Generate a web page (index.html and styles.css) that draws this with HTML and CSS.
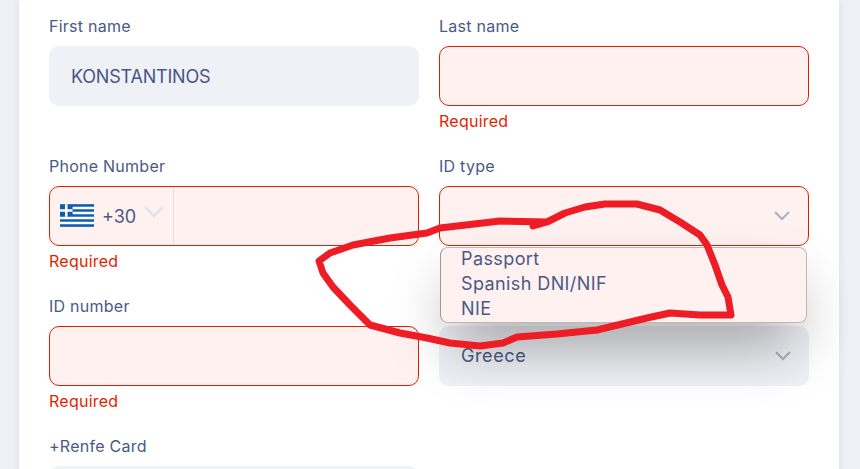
FILE: index.html
```html
<!DOCTYPE html>
<html lang="en">
<head>
    <meta charset="UTF-8">
    <meta name="viewport" content="width=device-width, initial-scale=1.0">
    <title>Passenger details</title>
    <link rel="stylesheet" href="styles.css">
</head>
<body>
    <form class="card">
        <div class="field">
            <label for="firstName">First name</label>
            <input class="input" type="text" id="firstName" value="KONSTANTINOS" readonly>
        </div>
        <div class="field">
            <label for="lastName">Last name</label>
            <input class="input invalid" type="text" id="lastName">
            <div class="error">Required</div>
        </div>
        <div class="field">
            <label for="phone">Phone Number</label>
            <div class="phone invalid">
                <div class="prefix">
                    <svg class="flag" width="34" height="25" viewBox="0 0 27 18">
                        <rect width="27" height="18" fill="#0d5eaf"/>
                        <path d="M10 3h17M10 7h17M0 11h27M0 15h27" stroke="#fff" stroke-width="2"/>
                        <path d="M5 0v10M0 5h10" stroke="#fff" stroke-width="2"/>
                    </svg>
                    <span class="dial">+30</span>
                    <svg class="chevron-light" width="20" height="12" viewBox="0 0 20 12">
                        <path d="M1 1l9 9 9-9" fill="none" stroke="#e0e3ee" stroke-width="2.6"/>
                    </svg>
                </div>
            </div>
            <div class="error">Required</div>
        </div>
        <div class="field">
            <label>ID type</label>
            <div class="select invalid">
                <svg width="16" height="10" viewBox="0 0 16 10">
                    <path d="M1 1l7 7 7-7" fill="none" stroke="#a9b0c9" stroke-width="2"/>
                </svg>
            </div>
            <ul class="dropdown">
                <li>Passport</li>
                <li>Spanish DNI/NIF</li>
                <li>NIE</li>
            </ul>
        </div>
        <div class="field">
            <label for="idNumber">ID number</label>
            <input class="input invalid" type="text" id="idNumber">
            <div class="error">Required</div>
        </div>
        <div class="field">
            <div class="select filled">
                <span>Greece</span>
                <svg width="16" height="10" viewBox="0 0 16 10">
                    <path d="M1 1l7 7 7-7" fill="none" stroke="#a9b0c9" stroke-width="2"/>
                </svg>
            </div>
        </div>
        <div class="field">
            <label for="renfe">+Renfe Card</label>
            <input class="input" type="text" id="renfe" readonly>
        </div>
    </form>

    <svg class="scribble" width="860" height="469" viewBox="0 0 860 469">
        <path d="M533 226L547 222L565 213L585 207L605 204L637 204L660 210L680 222L700 235L707 245L715 265L722 285L728 297L731 315L700 315L670 313L647 318L597 330L557 334L517 337L503 343L480 346L450 343L427 338L400 333L370 325L350 305L333 287L323 273L319 261L330 253L353 245L390 238L427 233L440 228L500 221L547 222" fill="none" stroke="#ee1c25" stroke-width="7" stroke-linejoin="round" stroke-linecap="round"/>
    </svg>
</body>
</html>
```
FILE: styles.css
```css
html, body { margin: 0; height: 469px; overflow: hidden; }
body { background: #eff1f6; font-family: "Inter", sans-serif; color: #4a5a85; padding: 0 21px 0 19px; box-sizing: border-box; position: relative; }
.card { background: #fff; box-shadow: 0 0 8px rgba(60, 70, 130, .12); padding: 16px 30px 0; display: grid; grid-template-columns: 370px 370px; grid-auto-rows: 115px; column-gap: 20px; row-gap: 25px; height: 600px; }
.field { position: relative; }
label { display: block; height: 20px; line-height: 20px; margin-bottom: 10px; font-size: 16px; letter-spacing: .25px; }
.field:nth-child(6) { padding-top: 30px; }
.input { display: block; box-sizing: border-box; width: 100%; height: 60px; padding: 0 22px; border: 0; border-radius: 10px; background: #eff1f6; font: inherit; font-size: 18px; letter-spacing: -.2px; color: #4a5585; outline: none; }
.invalid { background: #fff1f0; border: 1px solid #e01e00; }
.error { height: 20px; line-height: 20px; margin-top: 5px; font-size: 16px; letter-spacing: .25px; color: #e21f00; }
.phone { box-sizing: border-box; height: 60px; border-radius: 10px; display: flex; }
.prefix { display: flex; align-items: center; width: 124px; border-right: 1px solid #e0dfe6; box-sizing: border-box; padding-left: 10px; }
.flag { flex: none; margin-top: -1px; }
.dial { font-size: 18px; margin-left: 8px; }
.chevron-light { margin-left: 8px; margin-top: -8px; }
.select { box-sizing: border-box; height: 60px; border-radius: 10px; display: flex; align-items: center; justify-content: space-between; padding: 0 18px 0 22px; font-size: 18px; letter-spacing: .6px; }
.select span { margin-top: -2px; }
.select svg { margin-left: auto; }
.select.filled { background: #eff1f6; }
.dropdown { position: absolute; z-index: 2; left: 1px; right: 2px; top: 91px; margin: 0; padding: 0 20px; height: 76px; box-sizing: border-box; list-style: none; background: #fff1f0; border: 1px solid #bdb8b8; border-left-color: #9a9a9a; border-radius: 8px; box-shadow: 0 30px 60px -12px rgba(0, 0, 0, .4); font-size: 18px; letter-spacing: .4px; }
.dropdown li { height: 25px; line-height: 21px; }
.scribble { position: absolute; left: 0; top: 0; z-index: 3; }
```
